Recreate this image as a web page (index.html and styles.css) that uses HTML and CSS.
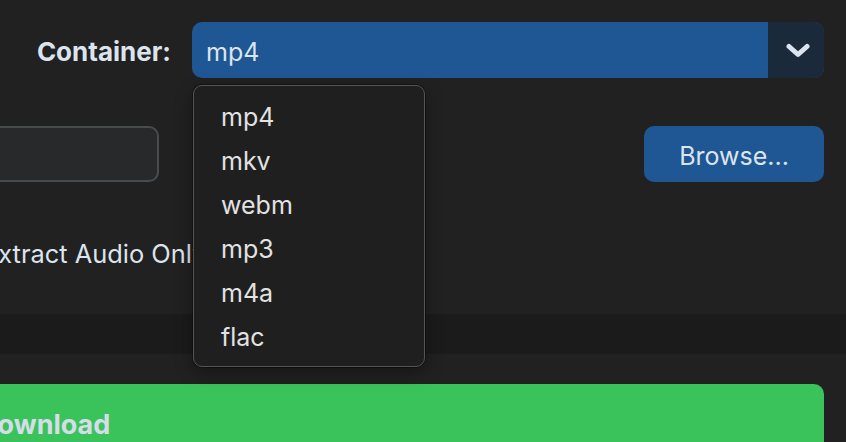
FILE: index.html
```html
<!DOCTYPE html>
<html lang="en">
<head>
<meta charset="utf-8">
<title>Download options</title>
<link rel="stylesheet" href="styles.css">
</head>
<body>
<div class="window">
  <div class="row row-container">
    <label class="label">Container:</label>
    <div class="select">
      <span class="select-value">mp4</span>
      <span class="select-arrow">
        <svg width="24" height="15" viewBox="0 0 24 15"><polyline points="3,3.5 12,11.5 21,3.5" fill="none" stroke="#dce4ee" stroke-width="5" stroke-linecap="round" stroke-linejoin="round"/></svg>
      </span>
      <ul class="menu">
        <li>mp4</li>
        <li>mkv</li>
        <li>webm</li>
        <li>mp3</li>
        <li>m4a</li>
        <li>flac</li>
      </ul>
    </div>
  </div>
  <div class="row row-output">
    <div class="field"></div>
    <button class="btn browse">Browse...</button>
  </div>
  <div class="row row-check">
    <span class="checkbox"></span>
    <span class="check-label">Extract Audio Only</span>
  </div>
  <div class="band"></div>
  <button class="btn download">Download</button>
</div>
</body>
</html>
```

FILE: styles.css
```css
* { box-sizing: border-box; }

html, body {
  margin: 0;
  padding: 0;
  background: #212121;
  overflow: hidden;
  width: 846px;
  height: 442px;
}

body {
  font-family: "Inter", "Liberation Sans", sans-serif;
  color: #dce4ee;
}

.window {
  margin-left: -200px;
  width: 1046px;
  padding: 22px 22px 0 0;
  display: flex;
  flex-direction: column;
}

.row {
  display: flex;
  align-items: center;
  height: 56px;
}

.label {
  flex: 1;
  text-align: right;
  padding-right: 21px;
  font-weight: 700;
  font-size: 26px;
  padding-top: 3px;
}

.select {
  position: relative;
  width: 632px;
  height: 56px;
  display: flex;
  background: #1f5794;
  border-radius: 10px;
}

.select-value {
  flex: 1;
  display: flex;
  align-items: center;
  padding-left: 14px;
  padding-top: 3px;
  font-size: 25px;
}

.select-arrow {
  width: 56px;
  display: flex;
  align-items: center;
  justify-content: center;
  background: #1b2a3b;
  border-radius: 0 10px 10px 0;
  padding-left: 4px;
}

.menu {
  position: absolute;
  top: 63px;
  left: 1px;
  width: 232px;
  height: 282px;
  margin: 0;
  padding: 9px 0 0 27px;
  list-style: none;
  background: #1f1f1f;
  border: 1.5px solid #555555;
  border-radius: 9px;
  box-shadow: 0 0 0 1px rgba(0,0,0,0.35), 0 6px 18px rgba(0,0,0,0.35);
  z-index: 10;
}

.menu li {
  height: 44px;
  line-height: 44px;
  font-size: 25px;
  color: #e2e2e2;
}

.row-output {
  margin-top: 48px;
}

.field {
  width: 359px;
  height: 56px;
  background: #27292b;
  border: 2px solid #474c4f;
  border-radius: 10px;
}

.btn {
  font-family: inherit;
  border: none;
  color: #dce4ee;
  cursor: pointer;
}

.browse {
  margin-left: auto;
  width: 180px;
  height: 56px;
  background: #1f5794;
  border-radius: 10px;
  font-size: 25px;
  padding: 3px 0 0;
}

.row-check {
  margin-top: 42px;
  padding-left: 143px;
  gap: 12px;
}

.checkbox {
  width: 28px;
  height: 28px;
  border: 2px solid #5b6166;
  border-radius: 6px;
}

.check-label {
  font-size: 25.4px;
  padding-top: 2px;
}

.band {
  margin-top: 34px;
  margin-right: -22px;
  height: 40px;
  background: #1b1b1b;
}

.download {
  margin-top: 30px;
  height: 80px;
  background: #3bc35b;
  border-radius: 10px;
  text-align: left;
  padding: 25px 0 0 178px;
  font-size: 27px;
  line-height: 32px;
  font-weight: 700;
  color: #d6dde9;
  display: flex;
  align-items: flex-start;
}
```
